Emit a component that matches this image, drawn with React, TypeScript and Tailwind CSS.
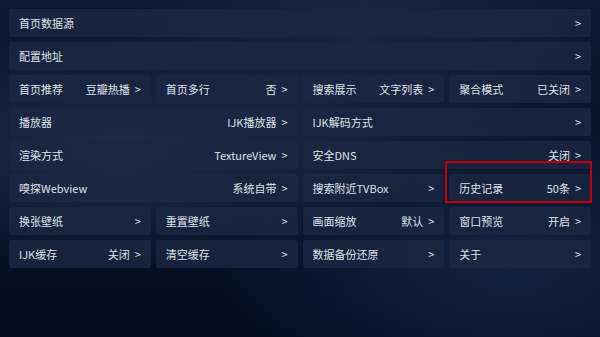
import React from 'react';

type Item = { label: string; value?: string; span?: string; highlight?: boolean };

const rows: Item[] = [
  { label: '首页数据源', span: 'col-span-4' },
  { label: '配置地址', span: 'col-span-4' },
  { label: '首页推荐', value: '豆瓣热播' },
  { label: '首页多行', value: '否' },
  { label: '搜索展示', value: '文字列表' },
  { label: '聚合模式', value: '已关闭' },
  { label: '播放器', value: 'IJK播放器', span: 'col-span-2' },
  { label: 'IJK解码方式', span: 'col-span-2' },
  { label: '渲染方式', value: 'TextureView', span: 'col-span-2' },
  { label: '安全DNS', value: '关闭', span: 'col-span-2' },
  { label: '嗅探Webview', value: '系统自带', span: 'col-span-2' },
  { label: '搜索附近TVBox' },
  { label: '历史记录', value: '50条', highlight: true },
  { label: '换张壁纸' },
  { label: '重置壁纸' },
  { label: '画面缩放', value: '默认' },
  { label: '窗口预览', value: '开启' },
  { label: 'IJK缓存', value: '关闭' },
  { label: '清空缓存' },
  { label: '数据备份还原' },
  { label: '关于' },
];

function Cell({ item }: { item: Item }) {
  return (
    <div className={`relative ${item.span ?? ''}`}>
      <div className="flex h-[28px] items-center justify-between rounded-[3px] bg-[#1c2742]/80 pl-[10px] pr-[10px] text-[11px] text-[#dfe3ea]">
        <span>{item.label}</span>
        <span className="flex items-center gap-[5px]">
          {item.value && <span>{item.value}</span>}
          <span>&gt;</span>
        </span>
      </div>
      {item.highlight && (
        <div className="pointer-events-none absolute -left-[4px] -top-[13px] -right-[1px] -bottom-[1px] z-10 border-2 border-solid border-red-700" />
      )}
    </div>
  );
}

export default function App() {
  return (
    <div
      className="relative h-[337px] w-[600px] overflow-hidden bg-[#0a1228] bg-[radial-gradient(ellipse_at_20%_45%,rgba(70,90,140,0.35),transparent_45%),radial-gradient(ellipse_at_85%_80%,rgba(40,80,130,0.3),transparent_40%),radial-gradient(ellipse_at_60%_10%,rgba(50,70,120,0.3),transparent_45%),linear-gradient(180deg,#0e1830,#060d22)]"
      style={{ fontFamily: '"Noto Sans CJK SC", "Noto Sans", sans-serif' }}
    >
      <div className="grid grid-cols-4 gap-[5px] px-[9px] pt-[9px]">
        {rows.map((item) => (
          <Cell key={item.label} item={item} />
        ))}
      </div>
    </div>
  );
}
